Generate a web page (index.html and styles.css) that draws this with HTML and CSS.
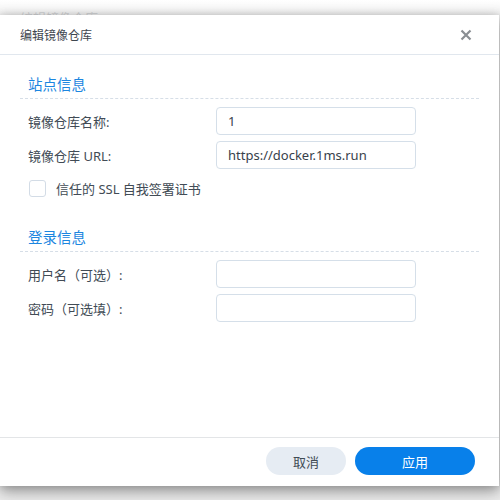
FILE: index.html
```html
<!DOCTYPE html>
<html lang="zh-CN">
<head>
    <meta charset="UTF-8">
    <meta name="viewport" content="width=device-width, initial-scale=1.0">
    <title>编辑镜像仓库</title>
    <link rel="stylesheet" href="styles.css">
</head>
<body>
    <div class="backdrop">
        <p class="ghost-title">编辑镜像仓库</p>
    </div>

    <div class="dialog">
        <div class="dialog-header">
            <span class="dialog-title">编辑镜像仓库</span>
            <button class="close-btn" aria-label="关闭">
                <svg width="12" height="12" viewBox="0 0 12 12">
                    <path d="M1.5 1.5 L10.5 10.5 M10.5 1.5 L1.5 10.5" stroke="#8a8e93" stroke-width="2.2" stroke-linecap="butt"/>
                </svg>
            </button>
        </div>

        <div class="dialog-body">
            <div class="section-title">站点信息</div>
            <div class="form-row first">
                <label class="form-label">镜像仓库名称:</label>
                <input class="form-input" type="text" value="1">
            </div>
            <div class="form-row">
                <label class="form-label">镜像仓库 URL:</label>
                <input class="form-input" type="text" value="https://docker.1ms.run">
            </div>
            <div class="check-row">
                <span class="checkbox"></span>
                <span class="check-text">信任的 SSL 自我签署证书</span>
            </div>

            <div class="section-title second">登录信息</div>
            <div class="form-row first">
                <label class="form-label">用户名（可选）:</label>
                <input class="form-input" type="text">
            </div>
            <div class="form-row">
                <label class="form-label">密码（可选填）:</label>
                <input class="form-input" type="password">
            </div>
        </div>

        <div class="dialog-footer">
            <button class="btn btn-cancel">取消</button>
            <button class="btn btn-apply">应用</button>
        </div>
    </div>
</body>
</html>
```

FILE: styles.css
```css
*{
    padding: 0;
    margin: 0;
    box-sizing: border-box;
    font-family: "Noto Sans", "Noto Sans CJK SC", sans-serif;
}
body{
    width: 500px;
    height: 500px;
    overflow: hidden;
    background: #f7f7f7;
    position: relative;
}
.backdrop{
    height: 100%;
    background: linear-gradient(180deg,#ffffff 0,#f2f2f2 14px,#ededed 100%);
}
.ghost-title{
    padding: 8px 0 0 20px;
    font-size: 13px;
    color: #d2d4d6;
}
.dialog{
    position: absolute;
    top: 15px;
    left: 0;
    width: 499px;
    height: 471px;
    background: #ffffff;
    display: flex;
    flex-direction: column;
    box-shadow: 0 6px 14px rgba(0,0,0,0.35), 0 0 8px rgba(0,0,0,0.15);
}
.dialog-header{
    height: 40px;
    display: flex;
    align-items: center;
    justify-content: space-between;
    padding: 0 27px 0 20px;
    border-bottom: 1px solid #e1e7ee;
}
.dialog-title{
    font-size: 12px;
    color: #3f4750;
}
.close-btn{
    border: none;
    background: none;
    width: 12px;
    height: 12px;
    display: flex;
}
.dialog-body{
    flex: 1;
    padding: 0 20px;
}
.section-title{
    margin-top: 20px;
    height: 24px;
    line-height: 19px;
    padding-left: 8px;
    font-size: 14.5px;
    color: #1c86e0;
    border-bottom: 1px dashed #d6dee7;
}
.section-title.second{
    margin-top: 31px;
}
.form-row{
    display: flex;
    align-items: center;
    margin-top: 6px;
    height: 28px;
}
.form-row.first{
    margin-top: 8px;
}
.form-label{
    width: 196px;
    padding-left: 8px;
    font-size: 13px;
    color: #414b55;
}
.form-input{
    width: 200px;
    height: 28px;
    border: 1px solid #d5dfe9;
    border-radius: 4px;
    padding: 0 11px;
    font-size: 13px;
    color: #37414b;
    outline: none;
}
.check-row{
    display: flex;
    align-items: center;
    margin-top: 11px;
    padding-left: 9px;
    height: 17px;
}
.checkbox{
    width: 17px;
    height: 17px;
    border: 1px solid #d3dce6;
    border-radius: 3px;
    background: #ffffff;
}
.check-text{
    margin-left: 10px;
    font-size: 13px;
    color: #414b55;
}
.dialog-footer{
    height: 49px;
    border-top: 1px solid #e3e5e7;
    display: flex;
    align-items: center;
    justify-content: flex-end;
    gap: 9px;
    padding: 0 24px 2px 0;
}
.btn{
    height: 28px;
    border: none;
    border-radius: 14px;
    font-size: 13px;
}
.btn-cancel{
    width: 80px;
    background: #e6ecf3;
    color: #414b55;
}
.btn-apply{
    width: 120px;
    background: #0880ea;
    color: #ffffff;
}
```
